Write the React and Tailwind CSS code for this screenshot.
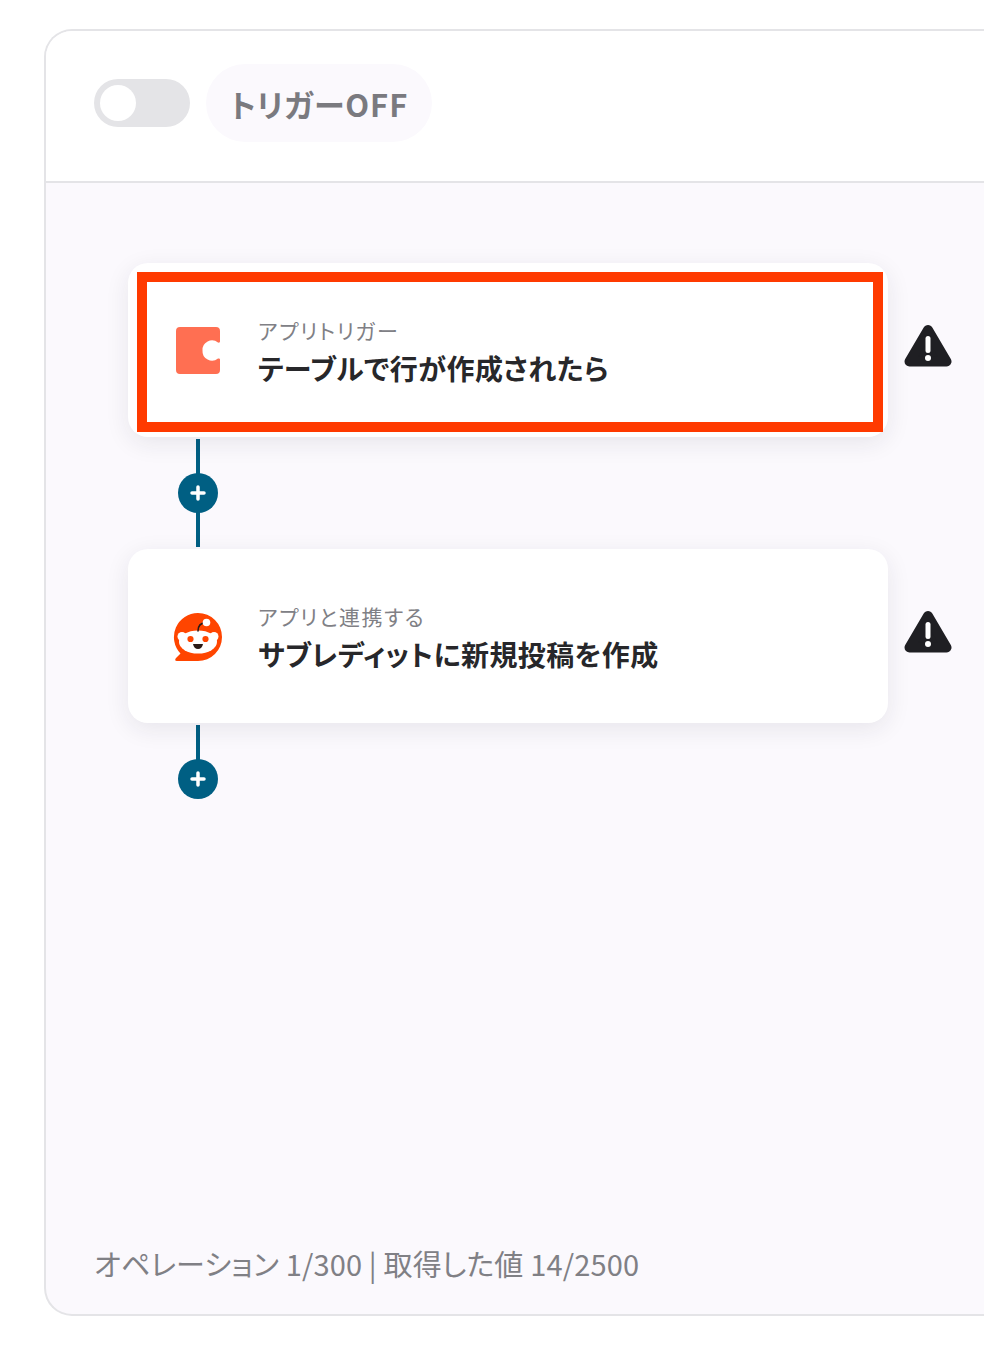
const font = { fontFamily: '"Noto Sans CJK JP", "Noto Sans", sans-serif' }

const WarningIcon = () => (
    <svg width="48" height="44" viewBox="0 0 48 44" className="shrink-0">
        <path d="M24 6 L42.5 37.5 H5.5 Z" fill="#1f1f23" stroke="#1f1f23" strokeWidth="10" strokeLinejoin="round" />
        <rect x="21.5" y="12" width="5" height="17" rx="2.5" fill="#fff" />
        <circle cx="24" cy="34" r="3" fill="#fff" />
    </svg>
)

const CodaIcon = () => (
    <svg width="44" height="48" viewBox="0 0 44 48">
        <path
            d="M4 1 H40 Q44 1 44 5 V15.5 Q44 17 42 16.5 A9.5 9.5 0 0 0 26.5 24.5 A9.5 9.5 0 0 0 42 32.5 Q44 32 44 33.5 V44 Q44 48 40 48 H4 Q0 48 0 44 V5 Q0 1 4 1 Z"
            fill="#ff6f52"
        />
    </svg>
)

const RedditIcon = () => (
    <svg width="50" height="50" viewBox="0 0 50 50" className="mt-1">
        <path d="M25 0 A24 24 0 1 1 25 48 H4 Q1 48 3 45 L7.5 40.5 A24 24 0 0 1 25 0 Z" fill="#ff4500" />
        <circle cx="9" cy="23.5" r="4.5" fill="#fff" />
        <circle cx="41" cy="23.5" r="4.5" fill="#fff" />
        <ellipse cx="25" cy="29" rx="19" ry="11.5" fill="#fff" />
        <path d="M25 18 Q25 10 33 9.5" fill="none" stroke="#2a1a16" strokeWidth="1.6" strokeLinecap="round" />
        <circle cx="33.5" cy="9.5" r="3.8" fill="#fff" />
        <circle cx="17.5" cy="26" r="3.1" fill="#ff4500" />
        <circle cx="32.5" cy="26" r="3.1" fill="#ff4500" />
        <path d="M20 31 H30 Q29 36 25 36 Q21 36 20 31 Z" fill="#2a1a16" />
    </svg>
)

const AddButton = () => (
    <div className="flex h-10 w-10 items-center justify-center rounded-full bg-[#005f83]">
        <svg width="16" height="16" viewBox="0 0 16 16">
            <path d="M8 2 V14 M2 8 H14" stroke="#fff" strokeWidth="3.5" strokeLinecap="round" />
        </svg>
    </div>
)

const StepCard = ({ icon, label, title, highlighted }) => (
    <div className="flex items-center">
        <div className="relative flex h-[174px] w-[760px] items-center rounded-[20px] bg-white shadow-[0_6px_24px_rgba(30,30,50,0.09)]">
            <div className="flex w-[130px] justify-center pl-[10px]">{icon}</div>
            <div className="pt-[3px]">
                <p className="text-[21px] leading-[30px] tracking-[1.6px] text-[#808085]">{label}</p>
                <p className="mt-[3px] text-[28px] leading-[40px] font-bold tracking-[0.4px] text-[#27272a]">{title}</p>
            </div>
            {highlighted && (
                <div className="absolute top-[9px] left-[9px] h-[160px] w-[746px] border-[10px] border-[#ff3a00]" />
            )}
        </div>
        <div className="mb-2 ml-4"><WarningIcon /></div>
    </div>
)

export default function App() {
    return (
        <div className="h-[1362px] w-[984px] overflow-hidden bg-white pt-[29px] pl-[44px] [font-feature-settings:'palt']" style={font}>
            <div className="flex h-[1287px] w-[1100px] flex-col overflow-hidden rounded-l-[28px] border-2 border-r-0 border-[#e4e4e7] bg-[#fbf9fd]">
                {/* Trigger header */}
                <div className="flex h-[152px] shrink-0 items-center gap-4 border-b-2 border-[#e4e4e7] bg-white pb-[6px] pl-[48px]">
                    <div className="flex h-12 w-24 items-center rounded-full bg-[#e4e4e7] pl-[6px]">
                        <div className="h-9 w-9 rounded-full bg-white" />
                    </div>
                    <div className="flex h-[78px] w-[226px] items-center justify-center rounded-full bg-[#fbf9fd] pt-[2px] text-[31px] font-bold tracking-[0.9px] text-[#7a7a7f]">
                        トリガーOFF
                    </div>
                </div>

                {/* Flow */}
                <div className="flex flex-1 flex-col pt-[80px] pl-[82px]">
                    <StepCard icon={<CodaIcon />} label="アプリトリガー" title="テーブルで行が作成されたら" highlighted />
                    <div className="flex h-[112px] w-[140px] justify-center py-[2px]">
                        <div className="flex h-full w-1 items-center justify-center bg-[#005f83]">
                            <div className="shrink-0"><AddButton /></div>
                        </div>
                    </div>
                    <StepCard icon={<RedditIcon />} label="アプリと連携する" title="サブレディットに新規投稿を作成" />
                    <div className="flex w-[140px] flex-col items-center pt-[2px]">
                        <div className="h-9 w-1 bg-[#005f83]" />
                        <div className="-mt-[2px]"><AddButton /></div>
                    </div>
                </div>

                {/* Usage */}
                <p className="pb-[29px] pl-[48px] text-[29px] leading-[44px] tracking-[0.16px] text-[#808085]">
                    オペレーション 1/300 | 取得した値 14/2500
                </p>
            </div>
        </div>
    )
}
